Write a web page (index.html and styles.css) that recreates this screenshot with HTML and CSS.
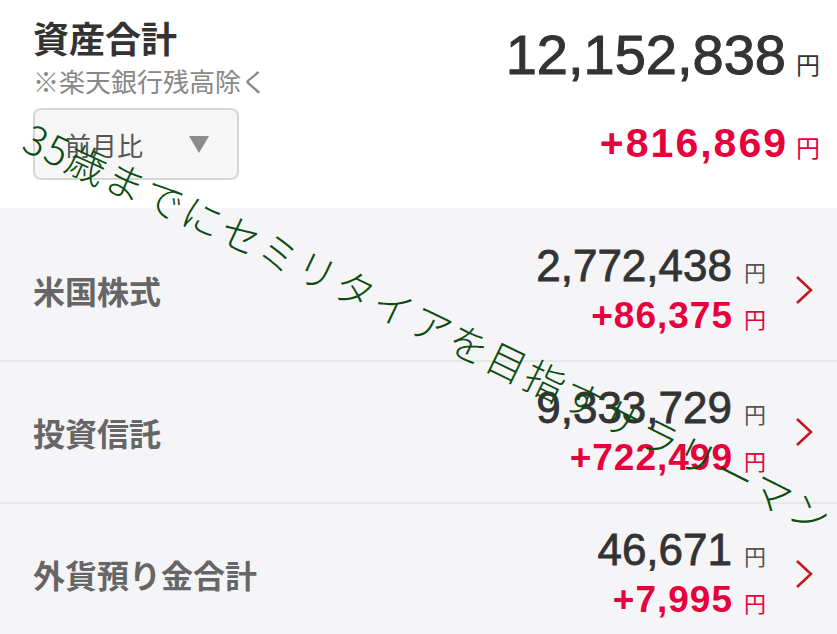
FILE: index.html
```html
<!DOCTYPE html>
<html lang="ja">
<head>
    <meta charset="UTF-8">
    <meta name="viewport" content="width=device-width, initial-scale=1.0">
    <title>資産合計</title>
    <link rel="stylesheet" href="styles.css">
</head>
<body>
<div class="page">

    <div class="summary">
        <div class="summary-left">
            <h1 class="title">資産合計</h1>
            <p class="note">※楽天銀行残高除く</p>
            <div class="select">
                <span>前月比</span>
                <svg class="select-arrow" width="20" height="17" viewBox="0 0 20 17"><polygon points="0,0 20,0 10,17"/></svg>
            </div>
        </div>
        <div class="summary-right">
            <div class="total"><span class="total-num">12,152,838</span><span class="yen">円</span></div>
            <div class="change"><span class="change-num">+816,869</span><span class="yen">円</span></div>
        </div>
    </div>

    <div class="list">
        <div class="row">
            <div class="label">米国株式</div>
            <div class="amounts">
                <div class="amount"><span class="amount-num">2,772,438</span><span class="yen">円</span></div>
                <div class="diff"><span class="diff-num">+86,375</span><span class="yen">円</span></div>
            </div>
            <svg class="chevron" width="18" height="30" viewBox="0 0 18 30"><polyline points="2,2 16,15 2,28"/></svg>
        </div>
        <div class="row">
            <div class="label">投資信託</div>
            <div class="amounts">
                <div class="amount"><span class="amount-num">9,333,729</span><span class="yen">円</span></div>
                <div class="diff"><span class="diff-num">+722,499</span><span class="yen">円</span></div>
            </div>
            <svg class="chevron" width="18" height="30" viewBox="0 0 18 30"><polyline points="2,2 16,15 2,28"/></svg>
        </div>
        <div class="row">
            <div class="label">外貨預り金合計</div>
            <div class="amounts">
                <div class="amount"><span class="amount-num">46,671</span><span class="yen">円</span></div>
                <div class="diff"><span class="diff-num">+7,995</span><span class="yen">円</span></div>
            </div>
            <svg class="chevron" width="18" height="30" viewBox="0 0 18 30"><polyline points="2,2 16,15 2,28"/></svg>
        </div>
    </div>

    <!-- 透かし文字 -->
    <svg class="watermark" width="837" height="634" viewBox="0 0 837 634">
        <defs><path id="arc" d="M 20 150 Q 424 334 850 550"/></defs>
        <text class="watermark-text"><textPath href="#arc">35歳までにセミリタイアを目指すサラリーマン</textPath></text>
    </svg>

</div>
</body>
</html>
```

FILE: styles.css
```css
body { margin: 0; background: #fff; font-family: "Noto Sans CJK JP", "Liberation Sans", sans-serif; }
.page { position: relative; width: 837px; height: 634px; overflow: hidden; }

.summary { display: flex; justify-content: space-between; padding: 11px 17px 28px 33px; background: #fff; }
.title { margin: 0; font-size: 36px; line-height: 52px; font-weight: 700; color: #333; }
.note { margin: 0; font-size: 26px; line-height: 36px; color: #888; }
.select { box-sizing: border-box; display: flex; align-items: center; justify-content: space-between; width: 206px; height: 72px; margin-top: 9px; padding: 0 28px 0 30px; border: 2px solid #d6d6d6; border-radius: 8px; background: #f6f6f6; font-size: 26px; color: #555; }
.select-arrow { fill: #8c8c8c; }

.summary-right { display: flex; flex-direction: column; align-items: flex-end; padding-top: 12px; }
.total, .change, .amount, .diff { display: flex; align-items: baseline; }
.total-num { font-family: "Liberation Sans", sans-serif; font-size: 56px; line-height: 64px; color: #333; -webkit-text-stroke: 1px #333; }
.total .yen { margin-left: 10px; font-size: 24px; color: #333; }
.change { margin-top: 32px; }
.change-num { font-family: "Liberation Sans", sans-serif; font-size: 41px; line-height: 48px; font-weight: 700; letter-spacing: 2px; color: #e8003d; }
.change .yen { margin-left: 8px; font-size: 24px; color: #e8003d; }

.list { padding-top: 12px; background: #f5f5f7; }
.row { display: flex; align-items: center; height: 140px; padding: 0 24px 0 33px; border-bottom: 2px solid #e7e7e9; }
.label { flex: 1; font-size: 32px; line-height: 40px; font-weight: 700; color: #666; }
.amounts { display: flex; flex-direction: column; align-items: flex-end; margin-right: 29px; }
.amount-num { font-family: "Liberation Sans", sans-serif; font-size: 44px; line-height: 48px; color: #333; -webkit-text-stroke: 0.8px #333; }
.amount .yen { margin-left: 12px; font-size: 22px; color: #555; }
.diff { margin-top: 4px; }
.diff-num { font-family: "Liberation Sans", sans-serif; font-size: 37px; line-height: 44px; font-weight: 700; letter-spacing: 1px; color: #e8003d; }
.diff .yen { margin-left: 11px; font-size: 22px; color: #e8003d; }
.chevron { fill: none; stroke: #c8141b; stroke-width: 2.5; }

.watermark { position: absolute; top: 0; left: 0; pointer-events: none; }
.watermark-text { font-family: "Noto Sans CJK JP", sans-serif; font-size: 40px; font-weight: 300; letter-spacing: 2.2px; fill: #0b4d10; }
```
